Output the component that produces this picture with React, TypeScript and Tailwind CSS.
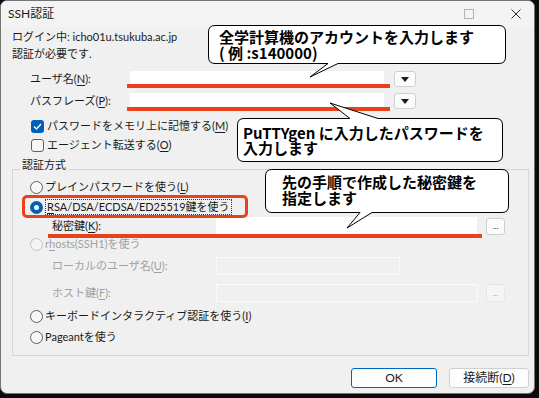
import type { ReactNode } from "react";

const U = ({ children }: { children: ReactNode }) => (
  <span className="underline underline-offset-[2px]">{children}</span>
);

const CheckBox = ({ checked }: { checked?: boolean }) =>
  checked ? (
    <div className="flex h-[13px] w-[13px] items-center justify-center rounded-[3px] bg-[#005fb8]">
      <svg width="9" height="7" viewBox="0 0 9 7">
        <path d="M1 3.5 L3.5 6 L8 1" fill="none" stroke="white" strokeWidth="1.3" />
      </svg>
    </div>
  ) : (
    <div className="h-[13px] w-[13px] rounded-[3px] border border-[#616161] bg-[#f7f7f7]" />
  );

const Radio = ({ checked, disabled }: { checked?: boolean; disabled?: boolean }) =>
  checked ? (
    <div className="flex h-[13px] w-[13px] items-center justify-center rounded-full bg-[#005fb8]">
      <div className="h-[5px] w-[5px] rounded-full bg-white" />
    </div>
  ) : (
    <div
      className={
        disabled
          ? "h-[13px] w-[13px] rounded-full border border-[#c4c4c4] bg-[#f3f3f3]"
          : "h-[13px] w-[13px] rounded-full border border-[#5f5f5f] bg-[#f7f7f7]"
      }
    />
  );

const DropButton = () => (
  <div className="ml-[10px] flex h-[16px] w-[22px] items-center justify-center rounded-[3px] border border-[#d0d0d0] bg-[#fbfbfb]">
    <svg width="8" height="5" viewBox="0 0 8 5">
      <path d="M0 0 H8 L4 5 Z" fill="#1a1a1a" />
    </svg>
  </div>
);

const DotsButton = ({ disabled }: { disabled?: boolean }) => (
  <div
    className={
      disabled
        ? "ml-[8px] flex h-[18px] w-[19px] items-center justify-center rounded-[3px] border border-[#e6e6e6] bg-[#f5f5f5] text-[8px] leading-[8px] text-[#a8a8a8]"
        : "ml-[9px] flex h-[17px] w-[19px] items-center justify-center rounded-[3px] border border-[#cfcfcf] bg-[#fbfbfb] text-[8px] leading-[8px] text-[#1a1a1a]"
    }
  >
    ...
  </div>
);

export default function App() {
  return (
    <div className="relative h-[398px] w-[539px] bg-[#0b0b0b] font-['Lato','Noto_Sans_CJK_JP',sans-serif] text-[11px] text-[#1a1a1a]">
      <div className="flex h-[394px] w-[535px] flex-col overflow-hidden rounded-[7px] border border-[#747474] bg-[#f0f0f0]">
        {/* title bar */}
        <div className="flex h-[26px] shrink-0 items-center bg-[#f3f3f3] pl-[7px]">
          <span className="text-[12px] leading-[16px]">SSH認証</span>
          <div className="ml-auto flex items-center gap-[37px] pr-[13px]">
            <svg width="10" height="10" viewBox="0 0 10 10">
              <rect x="0.5" y="0.5" width="9" height="9" fill="none" stroke="#b4b4b4" />
            </svg>
            <svg width="10" height="10" viewBox="0 0 10 10">
              <path d="M0.5 0.5 L9.5 9.5 M9.5 0.5 L0.5 9.5" stroke="#2a2a2a" strokeWidth="1" />
            </svg>
          </div>
        </div>

        <div className="flex flex-col pl-[11px]">
          <div className="mt-[2px] h-[16px] leading-[16px]">ログイン中: icho01u.tsukuba.ac.jp</div>
          <div className="mt-[1px] h-[16px] leading-[16px]">認証が必要です.</div>

          <div className="mt-[9px] flex h-[16px] items-center">
            <span className="ml-[18px] w-[100px] leading-[16px]">
              ユーザ名(<U>N</U>):
            </span>
            <div className="h-[16px] w-[254px] bg-white" />
            <DropButton />
          </div>
          <div className="mt-[6px] flex h-[16px] items-center">
            <span className="ml-[18px] w-[100px] leading-[16px]">
              パスフレーズ(<U>P</U>):
            </span>
            <div className="h-[16px] w-[254px] bg-white" />
            <DropButton />
          </div>

          <div className="mt-[9px] ml-[19px] flex h-[16px] items-center gap-[3px]">
            <CheckBox checked />
            <span className="leading-[16px]">
              パスワードをメモリ上に記憶する(<U>M</U>)
            </span>
          </div>
          <div className="mt-[3px] ml-[19px] flex h-[16px] items-center gap-[3px]">
            <CheckBox />
            <span className="leading-[16px]">
              エージェント転送する(<U>O</U>)
            </span>
          </div>

          {/* auth method group */}
          <fieldset className="mt-[6px] w-[517px] border border-[#d6d6d6] pb-[10px]">
            <legend className="ml-[7px] px-[2px] pb-[8px] leading-[12px]">認証方式</legend>

            <div className="ml-[17px] flex h-[16px] items-center gap-[2px]">
              <Radio />
              <span className="leading-[16px]">
                プレインパスワードを使う(<U>L</U>)
              </span>
            </div>
            <div className="mt-[4px] ml-[17px] flex h-[16px] items-center gap-[2px]">
              <Radio checked />
              <span className="border border-dotted border-[#333] px-[1px] leading-[14px]">
                <U>R</U>SA/DSA/ECDSA/ED25519鍵を使う
              </span>
            </div>
            <div className="mt-[2px] flex h-[18px] items-center">
              <span className="ml-[39px] w-[164px] leading-[16px]">
                秘密鍵(<U>K</U>):
              </span>
              <div className="h-[18px] w-[261px] bg-white" />
              <DotsButton />
            </div>

            <div className="mt-[1px] ml-[17px] flex h-[16px] items-center gap-[2px] text-[#a0a0a0]">
              <Radio disabled />
              <span className="leading-[16px]">
                r<U>h</U>osts(SSH1)を使う
              </span>
            </div>
            <div className="mt-[5px] flex h-[18px] items-center text-[#a0a0a0]">
              <span className="ml-[39px] w-[164px] leading-[16px]">
                ローカルのユーザ名(<U>U</U>):
              </span>
              <div className="h-[18px] w-[184px] border border-[#fafafa]" />
            </div>
            <div className="mt-[9px] flex h-[18px] items-center text-[#a0a0a0]">
              <span className="ml-[39px] w-[164px] leading-[16px]">
                ホスト鍵(<U>F</U>):
              </span>
              <div className="h-[18px] w-[262px] border border-[#fafafa]" />
              <DotsButton disabled />
            </div>

            <div className="mt-[6px] ml-[17px] flex h-[16px] items-center gap-[2px]">
              <Radio />
              <span className="leading-[16px]">
                キーボードインタラクティブ認証を使う(<U>I</U>)
              </span>
            </div>
            <div className="mt-[5px] ml-[17px] flex h-[16px] items-center gap-[2px]">
              <Radio />
              <span className="leading-[16px]">Pageantを使う</span>
            </div>
          </fieldset>

          <div className="mt-[12px] flex w-[517px] justify-end gap-[12px]">
            <div className="flex h-[20px] w-[86px] items-center justify-center rounded-[3px] border border-[#0067c0] bg-[#fdfdfd] text-[12px] leading-[16px]">
              OK
            </div>
            <div className="flex h-[20px] w-[80px] items-center justify-center rounded-[3px] border border-[#d0d0d0] bg-[#fdfdfd] text-[12px] leading-[16px]">
              接続断(<U>D</U>)
            </div>
          </div>
        </div>
      </div>

      {/* annotations */}
      <div className="absolute left-[127px] top-[84px] h-[4px] w-[263px] bg-[#e8411b]" />
      <div className="absolute left-[127px] top-[107px] h-[4px] w-[263px] bg-[#e8411b]" />
      <div className="absolute left-[48px] top-[234px] h-[4px] w-[434px] bg-[#e8411b]" />
      <div className="absolute left-[22px] top-[195px] h-[23px] w-[226px] rounded-[5px] border-[3px] border-[#e8411b]" />

      <svg className="absolute left-0 top-0" width="539" height="398" viewBox="0 0 539 398">
        <path
          d="M215 25.5 H499 Q505.5 25.5 505.5 32 V57 Q505.5 63.5 499 63.5 H338 L310 77 L328 63.5 H215 Q208.5 63.5 208.5 57 V32 Q208.5 25.5 215 25.5 Z"
          fill="white"
          stroke="black"
        />
        <path
          d="M244 118.5 H350 L330 103 L378 118.5 H496 Q502.5 118.5 502.5 125 V155 Q502.5 161.5 496 161.5 H244 Q237.5 161.5 237.5 155 V125 Q237.5 118.5 244 118.5 Z"
          fill="white"
          stroke="black"
        />
        <path
          d="M272 169.5 H502 Q508.5 169.5 508.5 176 V206 Q508.5 212.5 502 212.5 H372 L347 228 L360 212.5 H272 Q265.5 212.5 265.5 206 V176 Q265.5 169.5 272 169.5 Z"
          fill="white"
          stroke="black"
        />
      </svg>

      <p className="absolute left-[219px] top-[29px] font-['Noto_Sans_CJK_JP',sans-serif] text-[15px] font-bold leading-[16px] text-black">
        全学計算機のアカウントを入力します
        <br />( 例 :s140000)
      </p>
      <p className="absolute left-[243px] top-[125px] font-['Noto_Sans_CJK_JP',sans-serif] text-[15px] font-bold leading-[15px] text-black">
        PuTTYgen に入力したパスワードを
        <br />
        入力します
      </p>
      <p className="absolute left-[282px] top-[174px] font-['Noto_Sans_CJK_JP',sans-serif] text-[15px] font-bold leading-[16px] text-black">
        先の手順で作成した秘密鍵を
        <br />
        指定します
      </p>
    </div>
  );
}
